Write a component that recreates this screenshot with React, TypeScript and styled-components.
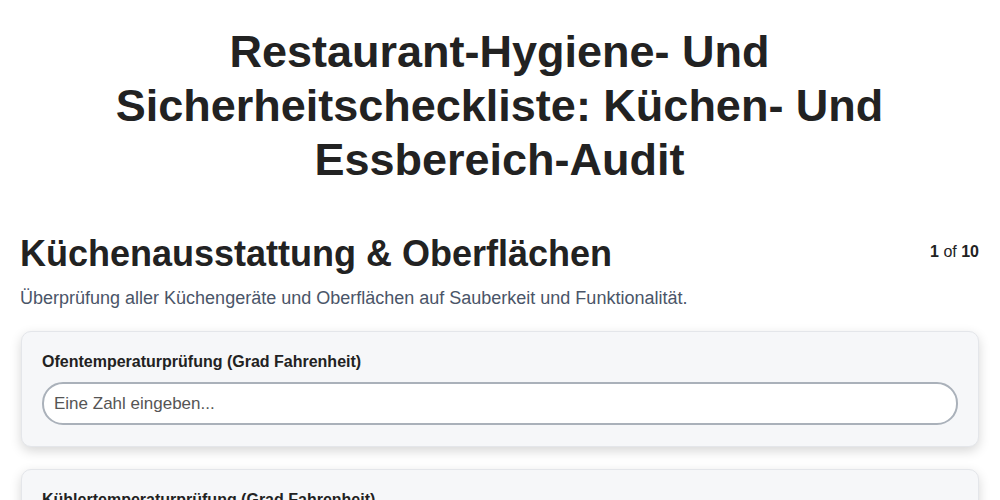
import styled, { createGlobalStyle } from "styled-components";

const GlobalStyle = createGlobalStyle`
  body {
    margin: 0;
    background: #ffffff;
    font-family: "Liberation Sans", Arial, sans-serif;
    color: #222;
  }
`;

const Page = styled.div`
  padding: 25px 21px 40px 20px;
`;

const Title = styled.h1`
  margin: 0 auto 45px;
  max-width: 800px;
  text-align: center;
  font-size: 45px;
  line-height: 54px;
  font-weight: bold;
  color: #222;
`;

const SectionHeader = styled.div`
  display: flex;
  justify-content: space-between;
  align-items: flex-start;
`;

const SectionTitle = styled.h2`
  margin: 0;
  font-size: 36px;
  line-height: 44px;
  font-weight: bold;
  color: #222;
`;

const Counter = styled.div`
  font-size: 16px;
  margin-top: 11px;
  color: #222;

  b {
    font-weight: bold;
  }
`;

const Description = styled.p`
  margin: 11px 0 22px;
  font-size: 18px;
  line-height: 22px;
  color: #4a5568;
`;

const Card = styled.div`
  background: #f6f7f9;
  border: 1px solid #e4e6ea;
  border-radius: 10px;
  box-shadow: 0 4px 12px rgba(0, 0, 0, 0.16);
  padding: 20px 20px 21px;
  margin: 0 0 22px 1px;
`;

const Label = styled.label`
  display: block;
  font-size: 16px;
  line-height: 20px;
  font-weight: bold;
  color: #222;
  margin-bottom: 10px;
`;

const Input = styled.input`
  box-sizing: border-box;
  width: 100%;
  height: 43px;
  padding: 0 10px;
  border: 2px solid #aab1ba;
  border-radius: 21px;
  background: #fff;
  font-family: inherit;
  font-size: 17px;
  color: #222;
  outline: none;

  &::placeholder {
    color: #555;
  }
`;

const fields = [
  "Ofentemperaturprüfung (Grad Fahrenheit)",
  "Kühlertemperaturprüfung (Grad Fahrenheit)",
];

export default function App() {
  return (
    <>
      <GlobalStyle />
      <Page>
        <Title>
          Restaurant-Hygiene- Und Sicherheitscheckliste: Küchen- Und
          Essbereich-Audit
        </Title>
        <SectionHeader>
          <SectionTitle>Küchenausstattung &amp; Oberflächen</SectionTitle>
          <Counter>
            <b>1</b> of <b>10</b>
          </Counter>
        </SectionHeader>
        <Description>
          Überprüfung aller Küchengeräte und Oberflächen auf Sauberkeit und
          Funktionalität.
        </Description>
        {fields.map((f) => (
          <Card key={f}>
            <Label>{f}</Label>
            <Input type="number" placeholder="Eine Zahl eingeben..." />
          </Card>
        ))}
      </Page>
    </>
  );
}
